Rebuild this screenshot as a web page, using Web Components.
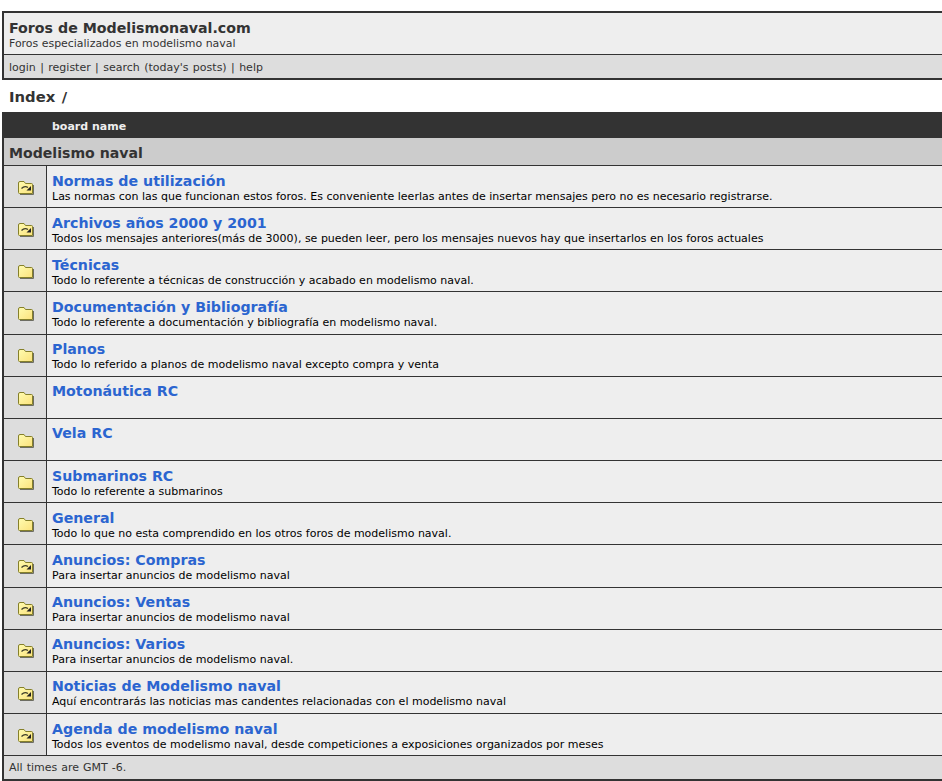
<!DOCTYPE html>
<html>
<head>
<meta charset="utf-8">
<style>
  html, body { margin: 0; padding: 0; background: #fff; overflow: hidden; }
  body { font-family: "DejaVu Sans", Verdana, sans-serif; color: #333; }
</style>
</head>
<body>
<board-header></board-header>
<board-crumb>Index /</board-crumb>
<board-table>
  <board-row icon="locked" name="Normas de utilización" desc="Las normas con las que funcionan estos foros. Es conveniente leerlas antes de insertar mensajes pero no es necesario registrarse."></board-row>
  <board-row icon="locked" name="Archivos años 2000 y 2001" desc="Todos los mensajes anteriores(más de 3000), se pueden leer, pero los mensajes nuevos hay que insertarlos en los foros actuales"></board-row>
  <board-row name="Técnicas" desc="Todo lo referente a técnicas de construcción y acabado en modelismo naval."></board-row>
  <board-row name="Documentación y Bibliografía" desc="Todo lo referente a documentación y bibliografía en modelismo naval."></board-row>
  <board-row name="Planos" desc="Todo lo referido a planos de modelismo naval excepto compra y venta"></board-row>
  <board-row name="Motonáutica RC" desc=""></board-row>
  <board-row name="Vela RC" desc=""></board-row>
  <board-row name="Submarinos RC" desc="Todo lo referente a submarinos"></board-row>
  <board-row name="General" desc="Todo lo que no esta comprendido en los otros foros de modelismo naval."></board-row>
  <board-row icon="locked" name="Anuncios: Compras" desc="Para insertar anuncios de modelismo naval"></board-row>
  <board-row icon="locked" name="Anuncios: Ventas" desc="Para insertar anuncios de modelismo naval"></board-row>
  <board-row icon="locked" name="Anuncios: Varios" desc="Para insertar anuncios de modelismo naval."></board-row>
  <board-row icon="locked" name="Noticias de Modelismo naval" desc="Aquí encontrarás las noticias mas candentes relacionadas con el modelismo naval"></board-row>
  <board-row icon="locked" name="Agenda de modelismo naval" desc="Todos los eventos de modelismo naval, desde competiciones a exposiciones organizados por meses"></board-row>
</board-table>
<script>
class BoardHeader extends HTMLElement {
    constructor() {
        super();
        this.attachShadow({ mode: 'open' });
        this.shadowRoot.innerHTML = `
      <style>
        :host {
          display: block;
          margin: 11px 0 0 2px;
          width: 950px;
          border: 2px solid #333;
          box-sizing: border-box;
          color: #333;
        }
        .top {
          background: #eee;
          height: 42px;
          padding: 7px 5px 0;
          box-sizing: border-box;
          border-bottom: 1px solid #333;
        }
        .title { font-size: 14.2px; font-weight: bold; line-height: 17px; }
        .sub { font-size: 10.95px; line-height: 13px; }
        .nav {
          background: #ddd;
          height: 23px;
          padding: 0 5px;
          font-size: 11px;
          word-spacing: 0.9px;
          line-height: 25px;
        }
      </style>
      <div class="top">
        <div class="title">Foros de Modelismonaval.com</div>
        <div class="sub">Foros especializados en modelismo naval</div>
      </div>
      <div class="nav">login | register | search (today's posts) | help</div>
    `;
    }
}

class BoardCrumb extends HTMLElement {
    constructor() {
        super();
        this.attachShadow({ mode: 'open' });
        this.shadowRoot.innerHTML = `
      <style>
        :host {
          display: block;
          height: 32px;
          padding-left: 9px;
          font-size: 14.8px;
          font-weight: bold;
          word-spacing: 1.5px;
          line-height: 34px;
          color: #333;
        }
      </style>
      <slot></slot>
    `;
    }
}

class BoardTable extends HTMLElement {
    constructor() {
        super();
        this.attachShadow({ mode: 'open' });
        this.shadowRoot.innerHTML = `
      <style>
        :host {
          display: block;
          margin-left: 2px;
          width: 950px;
          border-left: 2px solid #333;
          border-bottom: 2px solid #333;
          box-sizing: border-box;
        }
        .head {
          background: #333;
          color: #eee;
          height: 26px;
          margin-left: -2px;
          padding-left: 50px;
          font-size: 11px;
          font-weight: bold;
          line-height: 29px;
        }
        .cat {
          background: #ccc;
          height: 27px;
          padding-left: 5px;
          font-size: 14.1px;
          font-weight: bold;
          line-height: 30px;
          color: #333;
          border-bottom: 1px solid #333;
        }
        .foot {
          background: #ddd;
          height: 22.67px;
          padding-left: 5px;
          font-size: 11px;
          word-spacing: 0.5px;
          line-height: 24px;
          color: #333;
        }
      </style>
      <div class="head">board name</div>
      <div class="cat">Modelismo naval</div>
      <slot></slot>
      <div class="foot">All times are GMT -6.</div>
    `;
    }
}

class BoardRow extends HTMLElement {
    constructor() {
        super();
        this.attachShadow({ mode: 'open' });
        const locked = this.getAttribute('icon') === 'locked';
        const arrow = locked
            ? '<path d="M3.5 7.5 Q6.5 4.5 10 6.5" fill="none" stroke="#3c3c28" stroke-width="1.2"/><path d="M8.5 9.5 L13 9.5 L13 5 Z" fill="#222"/>'
            : '';
        this.shadowRoot.innerHTML = `
      <style>
        :host {
          display: grid;
          grid-template-columns: 43px 1fr;
          height: 42.1667px;
          box-sizing: border-box;
          border-bottom: 1px solid #333;
        }
        .icon {
          background: #ddd;
          border-right: 1px solid #333;
          display: flex;
          align-items: center;
          justify-content: center;
          padding: 2.3px 0 0 1px;
          box-sizing: border-box;
        }
        .body {
          background: #eee;
          padding: 6.51px 0 0 5px;
          min-width: 0;
          white-space: nowrap;
        }
        .name { font-size: 14.2px; font-weight: bold; line-height: 17px; color: #2b65d0; }
        .desc { font-size: 11px; line-height: 13px; color: #000; }
      </style>
      <div class="icon">
        <svg width="16" height="14" viewBox="0 0 16 14">
          <defs>
            <linearGradient id="g" x1="0" y1="0" x2="1" y2="1">
              <stop offset="0" stop-color="#fffcb0"/>
              <stop offset="1" stop-color="#fbe27c"/>
            </linearGradient>
          </defs>
          <path d="M0.5 2 Q0.5 0.5 2 0.5 L6 0.5 L7.5 2.5 L13.5 2.5 Q14.5 2.5 14.5 3.5 L14.5 12.5 L1.5 12.5 Q0.5 12.5 0.5 11.5 Z" fill="url(#g)" stroke="#85802a"/>
          <path d="M2 13.5 L15.5 13.5 L15.5 4" fill="none" stroke="#6d6d62"/>
          ${arrow}
        </svg>
      </div>
      <div class="body">
        <div class="name">${this.getAttribute('name')}</div>
        <div class="desc">${this.getAttribute('desc')}</div>
      </div>
    `;
    }
}

customElements.define('board-header', BoardHeader);
customElements.define('board-crumb', BoardCrumb);
customElements.define('board-table', BoardTable);
customElements.define('board-row', BoardRow);
</script>
</body>
</html>
